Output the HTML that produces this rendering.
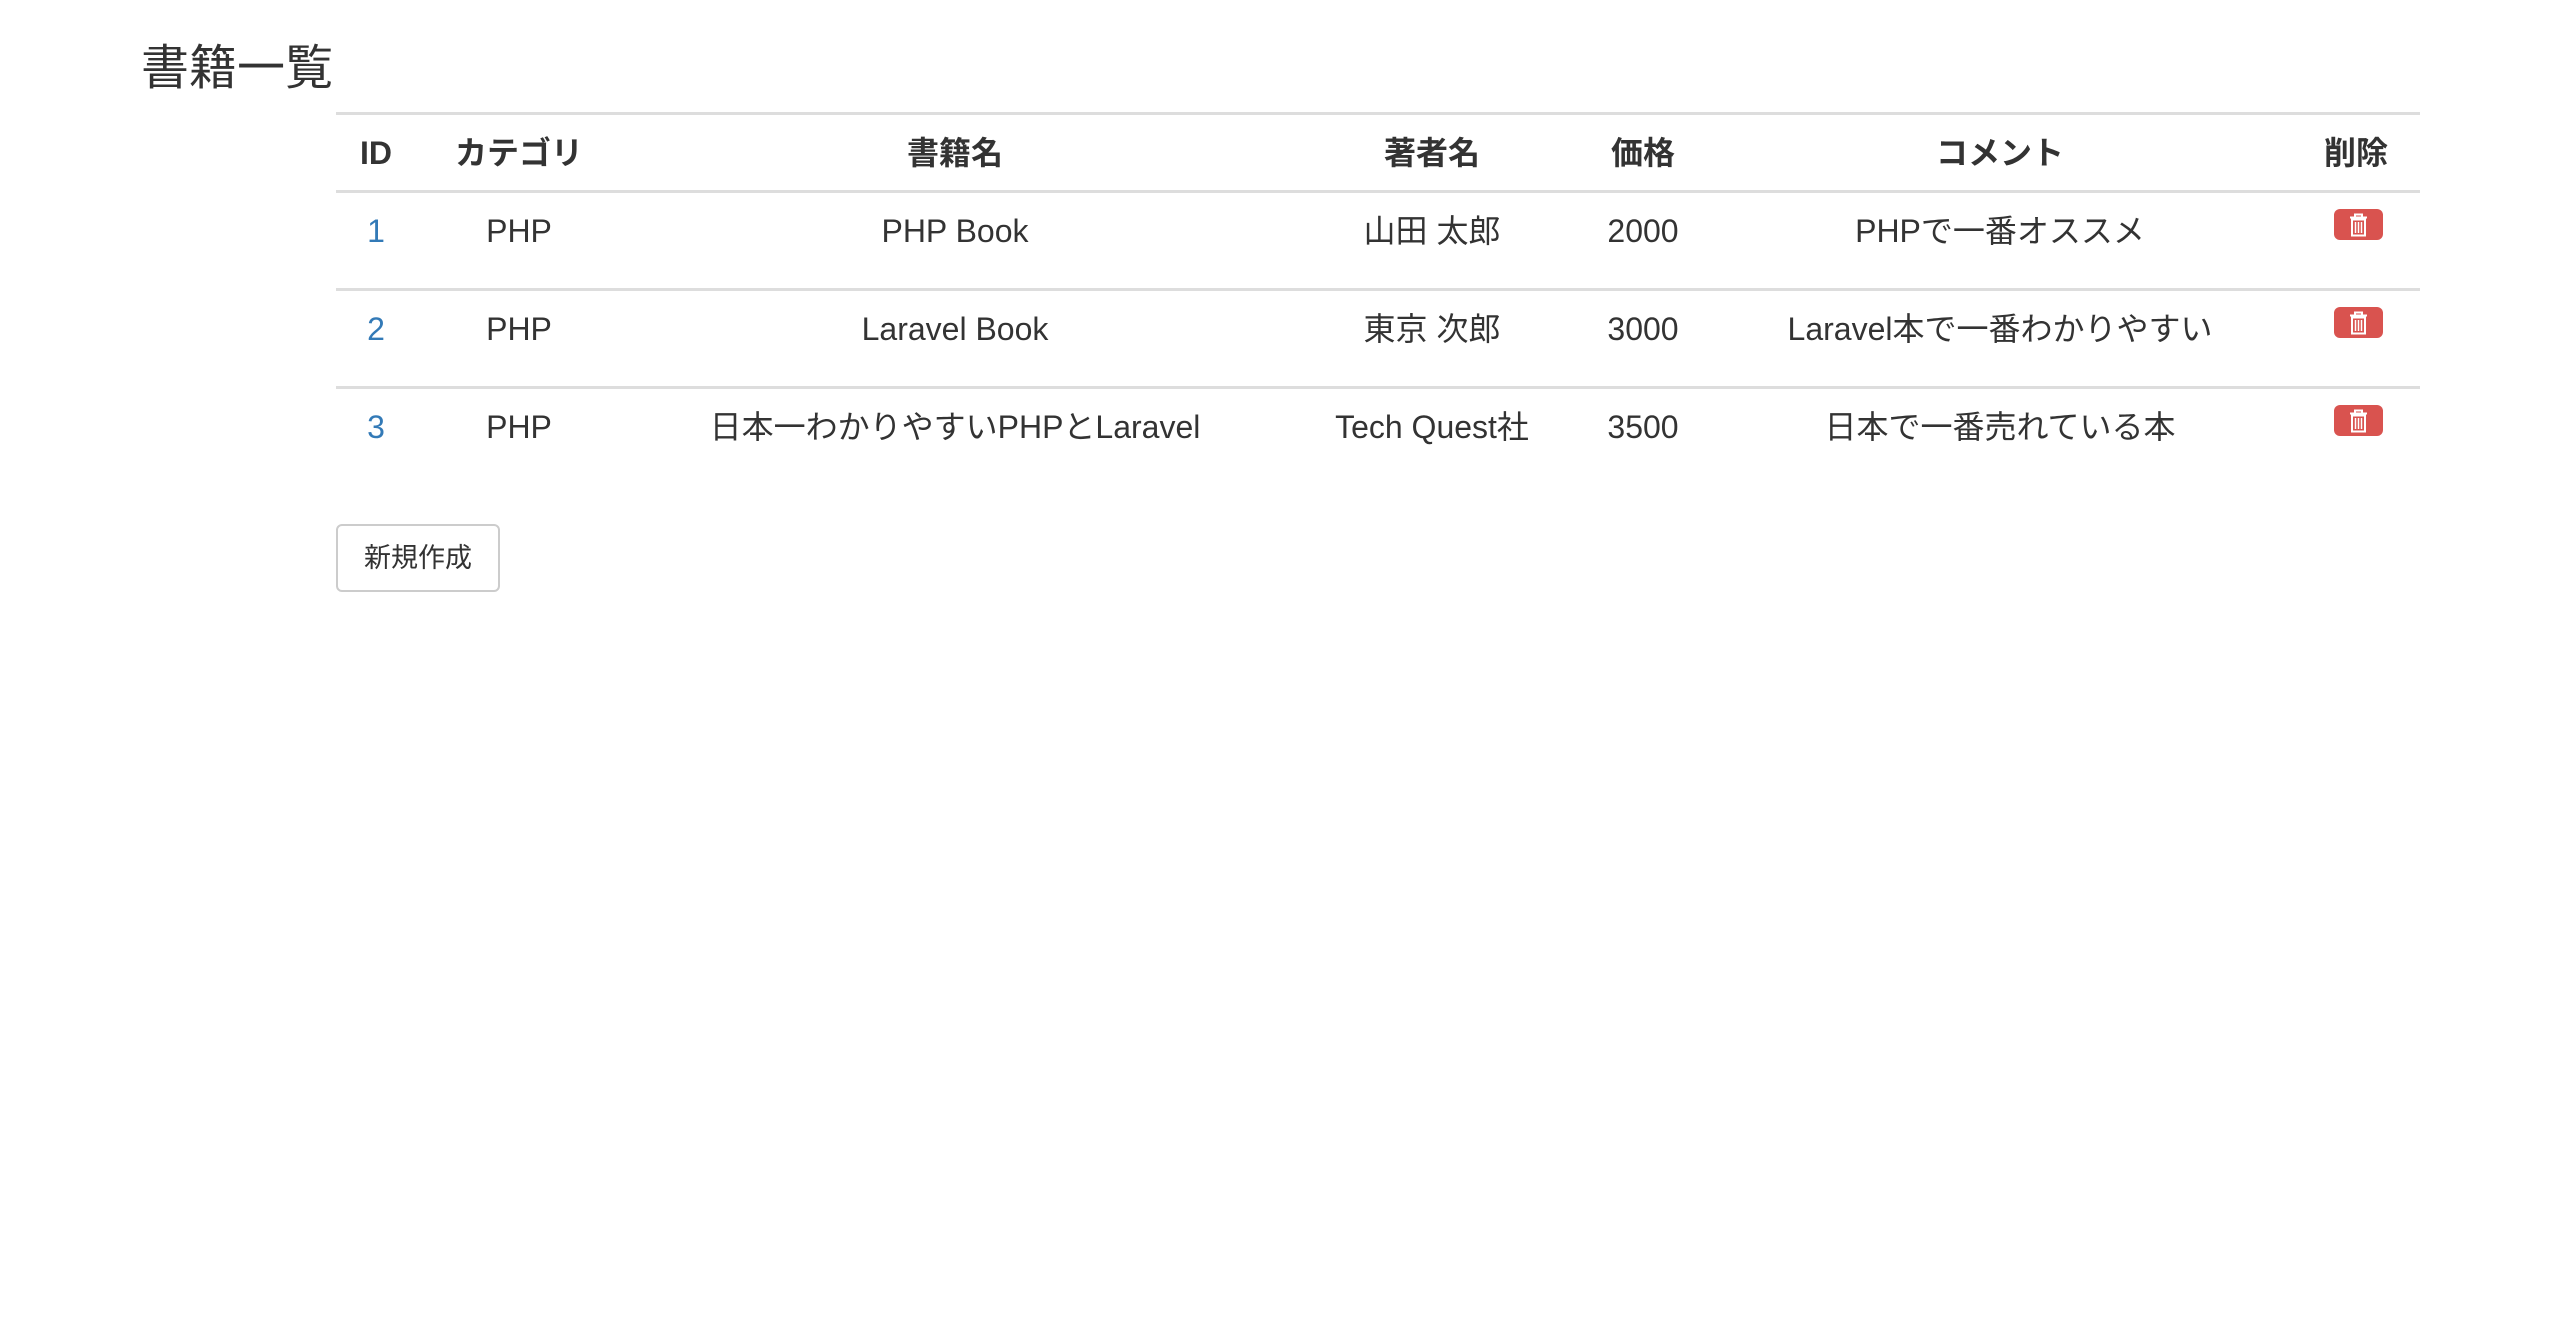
<!DOCTYPE html>
<html><head><meta charset="utf-8"><style>
body{margin:0;width:2560px;height:1332px;background:#fff;font-family:"Liberation Sans","Noto Sans CJK JP",sans-serif;color:#333;position:relative;overflow:hidden}
.a{position:absolute;white-space:nowrap;transform:translate(-50%,-50%);line-height:40px}
.h{font-weight:bold;font-size:32px}
.t{font-size:32px}
.l{position:absolute;left:336px;width:2084px;height:3px;background:#ddd}
.btn{position:absolute;width:49px;height:31px;background:#d9534f;border-radius:6px;left:2334px}
.btn svg{position:absolute;left:14px;top:4px}
</style></head><body>
<div style="position:absolute;left:141px;top:41px;font-size:48px;line-height:56px">書籍一覧</div>
<div class="l" style="top:112px"></div>
<div class="l" style="top:190px"></div>
<div class="l" style="top:288px"></div>
<div class="l" style="top:386px"></div>
<div class="a h" style="left:376px;top:153px">ID</div>
<div class="a h" style="left:519px;top:153px">カテゴリ</div>
<div class="a h" style="left:955px;top:153px">書籍名</div>
<div class="a h" style="left:1432px;top:153px">著者名</div>
<div class="a h" style="left:1643px;top:153px">価格</div>
<div class="a h" style="left:2000px;top:153px">コメント</div>
<div class="a h" style="left:2356px;top:153px">削除</div>

<div class="a t" style="left:376px;top:231px;color:#337ab7">1</div>
<div class="a t" style="left:519px;top:231px">PHP</div>
<div class="a t" style="left:955px;top:231px">PHP Book</div>
<div class="a t" style="left:1432px;top:231px">山田 太郎</div>
<div class="a t" style="left:1643px;top:231px">2000</div>
<div class="a t" style="left:2000px;top:231px">PHPで一番オススメ</div>

<div class="a t" style="left:376px;top:329px;color:#337ab7">2</div>
<div class="a t" style="left:519px;top:329px">PHP</div>
<div class="a t" style="left:955px;top:329px">Laravel Book</div>
<div class="a t" style="left:1432px;top:329px">東京 次郎</div>
<div class="a t" style="left:1643px;top:329px">3000</div>
<div class="a t" style="left:2000px;top:329px">Laravel本で一番わかりやすい</div>

<div class="a t" style="left:376px;top:427px;color:#337ab7">3</div>
<div class="a t" style="left:519px;top:427px">PHP</div>
<div class="a t" style="left:955px;top:427px">日本一わかりやすいPHPとLaravel</div>
<div class="a t" style="left:1432px;top:427px">Tech Quest社</div>
<div class="a t" style="left:1643px;top:427px">3500</div>
<div class="a t" style="left:2000px;top:427px">日本で一番売れている本</div>

<div class="btn" style="top:209px"><svg width="21" height="24" viewBox="0 0 21 24"><path d="M7 4V1.5h7V4M2 4.5h17M4 6.5h13v16H4z" fill="none" stroke="#fff" stroke-width="2"/><path d="M7.5 9v11M10.5 9v11M13.5 9v11" stroke="#fff" stroke-width="1.5"/></svg></div>
<div class="btn" style="top:307px"><svg width="21" height="24" viewBox="0 0 21 24"><path d="M7 4V1.5h7V4M2 4.5h17M4 6.5h13v16H4z" fill="none" stroke="#fff" stroke-width="2"/><path d="M7.5 9v11M10.5 9v11M13.5 9v11" stroke="#fff" stroke-width="1.5"/></svg></div>
<div class="btn" style="top:405px"><svg width="21" height="24" viewBox="0 0 21 24"><path d="M7 4V1.5h7V4M2 4.5h17M4 6.5h13v16H4z" fill="none" stroke="#fff" stroke-width="2"/><path d="M7.5 9v11M10.5 9v11M13.5 9v11" stroke="#fff" stroke-width="1.5"/></svg></div>

<div style="position:absolute;left:336px;top:524px;width:160px;height:64px;border:2px solid #ccc;border-radius:6px;font-size:27px;line-height:64px;text-align:center">新規作成</div>
</body></html>
